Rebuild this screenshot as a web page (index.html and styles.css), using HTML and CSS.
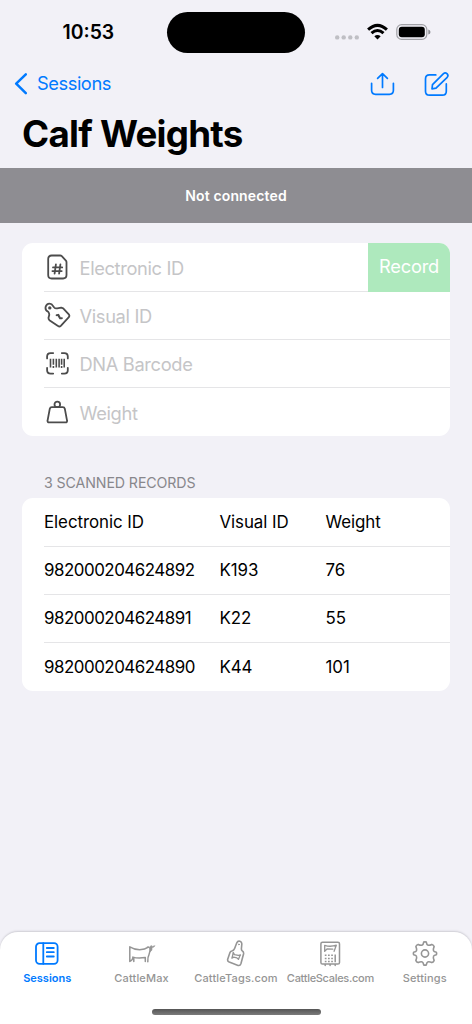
FILE: index.html
```
<!DOCTYPE html>
<html lang="en">
<head>
<meta charset="utf-8">
<title>Calf Weights</title>
<link rel="stylesheet" href="styles.css">
</head>
<body>
<div class="screen">
  <div class="status">
    <div class="time">10:53</div>
    <div class="island"></div>
    <svg class="indicators" width="100" height="24" viewBox="0 0 100 24">
      <g fill="#bfbfc4"><circle cx="5.2" cy="17.4" r="2.2"/><circle cx="11.7" cy="17.4" r="2.2"/><circle cx="18.3" cy="17.4" r="2.2"/><circle cx="24.8" cy="17.4" r="2.2"/></g>
      <g fill="none" stroke="#000" stroke-width="3"><path d="M36.1 9.7Q45.5 1.1 54.9 9.7"/><path d="M39.5 13.2Q45.5 7.7 51.5 13.2"/></g>
      <path d="M45.5 19.4l-3.2-3.2q3.2-2.6 6.4 0z"/>
      <rect x="64.8" y="4.7" width="30" height="14.6" rx="4.8" fill="none" stroke="#a1a1a6" stroke-width="1.2"/>
      <rect x="66.8" y="6.7" width="26" height="10.6" rx="3"/>
      <path d="M96.3 9.4q2.2.6 2.2 2.6t-2.2 2.6z" fill="#8e8e93"/>
    </svg>
  </div>
  <div class="nav">
    <div class="back">
      <svg width="14" height="24" viewBox="0 0 14 24"><path d="M12.8 2.3L3.2 11.7 12.8 21.1"/></svg>
      <span>Sessions</span>
    </div>
    <div class="actions">
      <svg width="26" height="28" viewBox="0 0 26 28"><path d="M2.6 13.3v7q0 4 4 4h13.8q4 0 4-4v-7M13.5 17.5V3.8M8.6 8.4l4.9-4.8 4.9 4.8"/></svg>
      <svg width="28" height="28" viewBox="0 0 28 28"><path d="M13.8 4.9H7.5q-4 0-4 4v12.3q0 4 4 4h12.8q4 0 4-4V13.9M10.5 14.7L21.5 3.7q1.7-1.5 3.5 0 1.8 1.8.2 3.6L14 18.2 10 18.9z"/></svg>
    </div>
  </div>
  <h1 class="title">Calf Weights</h1>
  <div class="banner">Not connected</div>

  <div class="card form">
    <div class="field">
      <svg width="28" height="28" viewBox="0 0 28 28"><path d="M8.7 2.5h8.4q1 0 1.7.7l4.1 4.4q.6.7.6 1.6v12.9q0 3.4-3.4 3.4H8.7q-3.5 0-3.5-3.4V5.9q0-3.4 3.5-3.4z"/><path d="M12.9 11.4l-1.3 9.3M17.4 11.4l-1.3 9.3M10 14.4h9.2M9.4 18.1h9.3"/></svg>
      <span class="hint">Electronic ID</span>
      <div class="record">Record</div>
    </div>
    <div class="field">
      <svg width="28" height="28" viewBox="0 0 28 28"><path d="M5.2 10.8Q1.6 9 2.8 5.4 4.6 1.4 8.6 3.2L11.2 6.5q1 1.2 3 .8l4-.7 2 .7 5.6 6q1.2 1.6-.2 3.1l-7.8 8.5q-1.4 1.3-2.8 0L6.4 19.2q-1-1-.9-2.4l.8-3.1q0-1.5-1.1-2.9z"/><circle cx="6.8" cy="6.9" r=".9" stroke-width="1.6"/><path stroke-width="1.9" d="M13.6 14.2l1.7-.4 1.9 3.6 1.7-.2M15.2 14.2l1.8 3"/></svg>
      <span class="hint">Visual ID</span>
    </div>
    <div class="field">
      <svg width="28" height="28" viewBox="0 0 28 28"><path d="M4.1 9.4V7.6q0-3.5 3.5-3.5h2.6M18.8 4.1h2.5q3.5 0 3.5 3.5v1.8M24.8 18.8v2.5q0 3.3-3.5 3.3h-2.5M10.2 24.6H7.6q-3.5 0-3.5-3.3v-2.5"/><path stroke-width="1.6" stroke-linecap="butt" d="M7.5 9.8v8.8M10.4 9.8v5.9M13.3 9.8v8.8M16.1 9.8v8.8M18.6 9.8v5.9M21.2 9.8v8.8M10.4 17v1.9M18.6 17v1.9"/></svg>
      <span class="hint">DNA Barcode</span>
    </div>
    <div class="field">
      <svg width="28" height="28" viewBox="0 0 28 28"><circle cx="14.3" cy="6.4" r="2.8"/><path d="M8.8 9.2h11q1.6 0 2 1.5l2.2 11.6q.5 2.1-1.6 2.1H6.3q-2.2 0-1.7-2.1L6.8 10.7q.4-1.5 2-1.5z"/></svg>
      <span class="hint">Weight</span>
    </div>
  </div>

  <div class="caption">3 SCANNED RECORDS</div>
  <div class="card table">
    <div class="row"><span>Electronic ID</span><span>Visual ID</span><span>Weight</span></div>
    <div class="row"><span class="num">982000204624892</span><span>K193</span><span>76</span></div>
    <div class="row"><span class="num">982000204624891</span><span>K22</span><span>55</span></div>
    <div class="row"><span class="num">982000204624890</span><span>K44</span><span>101</span></div>
  </div>

  <div class="tabbar">
    <div class="tabs">
      <div class="tab active">
        <svg width="28" height="28" viewBox="0 0 28 28"><rect x="3" y="3.2" width="21.6" height="20.6" rx="3.6"/><path d="M10.3 3.2v20.6M13.8 8h7M13.8 12.2h7M13.8 16.5h7"/></svg>
        <span>Sessions</span>
      </div>
      <div class="tab">
        <svg width="28" height="28" viewBox="0 0 28 28"><path stroke-width="1.5" d="M1.8 21.6V6.8q4.6 2.8 9.8 3Q17 9.5 20.4 7.1M2 21.2q3.1-1.4 2.9-4.1 4.4 1.6 12.4.5v3.9M5.8 18.5v3M19.8 21.7q-.2-4.8 1.2-7.1l1.4-5.2"/><path fill="currentColor" stroke-width=".6" d="M19.3 7l2.4.2q.6-1.1 1.4-1.8l1.1 1 2.8-.7-1.5 1.6-1.4.2-.2 2.7-1.7 1.6-.8-3.6z"/></svg>
        <span>CattleMax</span>
      </div>
      <div class="tab tags">
        <svg width="28" height="28" viewBox="0 0 28 28"><path stroke-width="1.6" d="M14.8 2.8q1-2.2 3.2-1.5 2 .6 1.8 2.9l-.4 4.5q-.1 1.3.9 2.2 1.5 1.1 1.3 2.8l-2.7 10.1q-.8 2.2-2.8 1.6L7.2 22.1q-2-.9-1.5-2.9l2.2-6.5q.4-1.2 1.9-1.6 2.1-.7 2.8-2.6z"/><circle cx="16.9" cy="4.4" r=".4" stroke-width="1"/><path stroke-width="1.3" d="M11.2 12.4l1.2 2.2 4 .8 2.1-.4-.9 1.5-1.2 2.9-1.5-1.5-3.2-.8-1.8 1 .8-3z"/></svg>
        <span>CattleTags.com</span>
      </div>
      <div class="tab scales">
        <svg width="28" height="28" viewBox="0 0 28 28"><path stroke-width="1.5" d="M6.5 2.2h15.4q1.6 0 1.6 1.6v18.7q0 1.6-1.6 1.6H6.5q-1.6 0-1.6-1.6V3.8q0-1.6 1.6-1.6zM9.2 24.8v.6M14.1 24.8v.6M19.2 24.8v.6"/><path stroke-width="1.3" d="M8.7 11.4V5.3q5.5 2 11.6-.1l-2.2 6.1M8.9 11.1l2.1-2.1 5.8.2M19 6.2l1.2-.8"/><path stroke-width="1.5" stroke-linecap="butt" d="M8.8 15.3h1.7M12 15.3h1.7M15.2 15.3h1.7M8.8 18.4h1.7M12 18.4h1.7M15.2 18.4h1.7M8.8 21.5h1.7M12 21.5h1.7M15.2 21.5h1.7M19.2 14.5v7.8"/></svg>
        <span>CattleScales.com</span>
      </div>
      <div class="tab">
        <svg width="28" height="28" viewBox="-14 -13.5 28 28"><path stroke-width="1.6" d="M-1.3-11.4Q0-11.9 1.3-11.4Q1.7-8.9 2.7-8.5 4.1-7.9 6.9-9.1Q8.6-8.6 9.1-6.9Q7.9-4.1 8.5-2.7 8.9-1.7 11.4-1.3Q11.9 0 11.4 1.3 8.9 1.7 8.5 2.7 7.9 4.1 9.1 6.9 8.6 8.6 6.9 9.1 4.1 7.9 2.7 8.5 1.7 8.9 1.3 11.4 0 11.9-1.3 11.4-1.7 8.9-2.7 8.5-4.1 7.9-6.9 9.1-8.6 8.6-9.1 6.9-7.9 4.1-8.5 2.7-8.9 1.7-11.4 1.3-11.9 0-11.4-1.3-8.9-1.7-8.5-2.7-7.9-4.1-9.1-6.9-8.6-8.6-6.9-9.1-4.1-7.9-2.7-8.5-1.7-8.9-1.3-11.4z"/><circle r="3.6" stroke-width="1.6"/></svg>
        <span>Settings</span>
      </div>
    </div>
    <div class="home"></div>
  </div>
</div>
</body>
</html>
```

FILE: styles.css
```
* { box-sizing: border-box; }
body { margin: 0; }
.screen {
  width: 472px;
  height: 1024px;
  display: flex;
  flex-direction: column;
  overflow: hidden;
  background: #f2f1f7;
  color: #000;
  font-family: Inter, "Liberation Sans", sans-serif;
}
svg { display: block; flex: none; fill: none; stroke-linecap: round; stroke-linejoin: round; }
.status {
  height: 60px;
  display: grid;
  grid-template-columns: 167px 138px 167px;
  padding-top: 12px;
}
.time { padding-left: 62.5px; font-size: 19.4px; font-weight: 600; line-height: 41px; letter-spacing: 0; }
.island { height: 41px; border-radius: 21px; background: #000; }
.indicators { fill: #000; stroke-linecap: butt; margin: 8px 0 0 27px; }
.nav {
  height: 48px;
  display: flex;
  justify-content: space-between;
  align-items: center;
  padding: 0 22px 0 13px;
  color: #007aff;
}
.nav svg { stroke: #007aff; stroke-width: 1.7; }
.back { display: flex; align-items: center; gap: 10px; font-size: 18.3px; letter-spacing: -0.45px; }
.back span { position: relative; top: -1px; }
.back svg { stroke-width: 2.5; }
.actions { display: flex; gap: 27px; }
.title { margin: 0; height: 60px; padding-left: 22px; font-size: 36.7px; font-weight: 700; line-height: 52px; letter-spacing: -0.75px; }
.banner {
  height: 55px;
  background: #8e8d92;
  color: #fff;
  text-align: center;
  font-size: 14px;
  font-weight: 600;
  line-height: 55px;
  letter-spacing: 0.15px;
}
.card { margin: 0 22px; border-radius: 11px; background: #fff; overflow: hidden; }
.form { margin-top: 20px; height: 193px; }
.field { height: 48.2px; display: flex; align-items: center; padding-left: 21px; position: relative; }
.field svg { stroke: #4c4c4c; stroke-width: 1.8; }
.hint { margin-left: 8.5px; flex: 1; color: #c5c5c7; font-size: 18.3px; letter-spacing: -0.35px; line-height: 48px; padding-top: 2px; }
.field:not(:first-child)::before, .row:not(:first-child)::before {
  content: "";
  position: absolute;
  left: 22px;
  right: 0;
  top: -0.6px;
  height: 1px;
  background: #e5e5e7;
}
.record { width: 82px; height: 49px; background: #aee9bd; color: #fff; text-align: center; font-size: 18.3px; line-height: 46px; letter-spacing: -0.2px; position: relative; z-index: 1; align-self: flex-start; }
.caption { height: 62px; padding: 37px 0 0 44px; color: #88878c; font-size: 14.2px; line-height: 19px; letter-spacing: -0.1px; }
.table { height: 193px; font-size: 16.9px; }
.row { height: 48.2px; display: grid; grid-template-columns: 175.5px 106px 1fr; padding-left: 22px; line-height: 48px; position: relative; letter-spacing: -0.07px; }
.num { letter-spacing: -0.48px; }
.tabbar {
  margin-top: auto;
  height: 92px;
  padding-top: 8px;
  display: flex;
  flex-direction: column;
  align-items: center;
  border-radius: 18px 18px 0 0;
  background: #fff;
  box-shadow: 0 -1px 2px #cdccd3;
}
.tabs { width: 472px; height: 69px; display: grid; grid-template-columns: repeat(5, 94.4px); }
.tab { display: flex; flex-direction: column; align-items: center; color: #959595; font-size: 11px; font-weight: 500; line-height: 18px; letter-spacing: 0.15px; white-space: nowrap; }
.tab svg { stroke: currentColor; stroke-width: 1.8; }
.tab span { margin-top: 1px; }
.scales span { letter-spacing: -0.3px; }
.active { color: #007aff; font-weight: 600; letter-spacing: 0; }
.home { width: 169px; height: 6px; border-radius: 3px; background: linear-gradient(#555, #7b7b7b); }
```
